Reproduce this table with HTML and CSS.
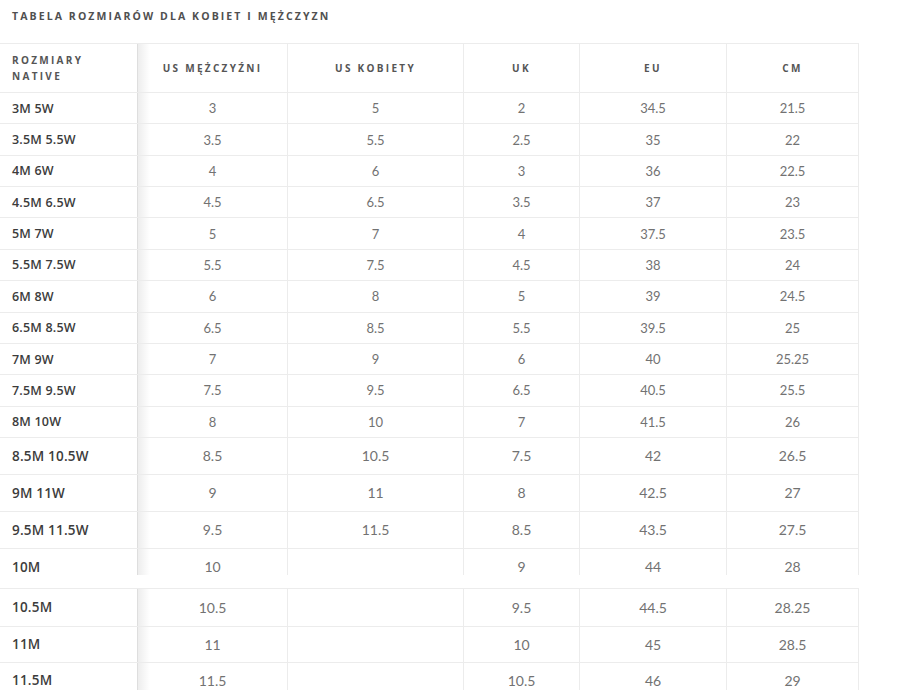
FILE: index.html
```html
<!DOCTYPE html>
<html lang="pl">
<head>
<meta charset="utf-8">
<title>Tabela rozmiarów</title>
<link rel="stylesheet" href="styles.css">
</head>
<body>
<h1 class="title">TABELA ROZMIARÓW DLA KOBIET I MĘŻCZYZN</h1>
<div class="table">
  <div class="row head">
    <div class="cell first">ROZMIARY<br>NATIVE</div>
    <div class="cell sh">US MĘŻCZYŹNI</div>
    <div class="cell">US KOBIETY</div>
    <div class="cell">UK</div>
    <div class="cell">EU</div>
    <div class="cell">CM</div>
  </div>
  <div class="row r1"><div class="cell first">3M 5W</div><div class="cell sh">3</div><div class="cell">5</div><div class="cell">2</div><div class="cell">34.5</div><div class="cell">21.5</div></div>
  <div class="row r1"><div class="cell first">3.5M 5.5W</div><div class="cell sh">3.5</div><div class="cell">5.5</div><div class="cell">2.5</div><div class="cell">35</div><div class="cell">22</div></div>
  <div class="row r1"><div class="cell first">4M 6W</div><div class="cell sh">4</div><div class="cell">6</div><div class="cell">3</div><div class="cell">36</div><div class="cell">22.5</div></div>
  <div class="row r1"><div class="cell first">4.5M 6.5W</div><div class="cell sh">4.5</div><div class="cell">6.5</div><div class="cell">3.5</div><div class="cell">37</div><div class="cell">23</div></div>
  <div class="row r1"><div class="cell first">5M 7W</div><div class="cell sh">5</div><div class="cell">7</div><div class="cell">4</div><div class="cell">37.5</div><div class="cell">23.5</div></div>
  <div class="row r1"><div class="cell first">5.5M 7.5W</div><div class="cell sh">5.5</div><div class="cell">7.5</div><div class="cell">4.5</div><div class="cell">38</div><div class="cell">24</div></div>
  <div class="row r1"><div class="cell first">6M 8W</div><div class="cell sh">6</div><div class="cell">8</div><div class="cell">5</div><div class="cell">39</div><div class="cell">24.5</div></div>
  <div class="row r1"><div class="cell first">6.5M 8.5W</div><div class="cell sh">6.5</div><div class="cell">8.5</div><div class="cell">5.5</div><div class="cell">39.5</div><div class="cell">25</div></div>
  <div class="row r1"><div class="cell first">7M 9W</div><div class="cell sh">7</div><div class="cell">9</div><div class="cell">6</div><div class="cell">40</div><div class="cell">25.25</div></div>
  <div class="row r1"><div class="cell first">7.5M 9.5W</div><div class="cell sh">7.5</div><div class="cell">9.5</div><div class="cell">6.5</div><div class="cell">40.5</div><div class="cell">25.5</div></div>
  <div class="row r1"><div class="cell first">8M 10W</div><div class="cell sh">8</div><div class="cell">10</div><div class="cell">7</div><div class="cell">41.5</div><div class="cell">26</div></div>
  <div class="row r2"><div class="cell first">8.5M 10.5W</div><div class="cell sh">8.5</div><div class="cell">10.5</div><div class="cell">7.5</div><div class="cell">42</div><div class="cell">26.5</div></div>
  <div class="row r2"><div class="cell first">9M 11W</div><div class="cell sh">9</div><div class="cell">11</div><div class="cell">8</div><div class="cell">42.5</div><div class="cell">27</div></div>
  <div class="row r2"><div class="cell first">9.5M 11.5W</div><div class="cell sh">9.5</div><div class="cell">11.5</div><div class="cell">8.5</div><div class="cell">43.5</div><div class="cell">27.5</div></div>
  <div class="row r2 cut"><div class="cell first">10M</div><div class="cell sh">10</div><div class="cell"></div><div class="cell">9</div><div class="cell">44</div><div class="cell">28</div></div>
</div>
<div class="table second">
  <div class="row r2 ra"><div class="cell first">10.5M</div><div class="cell sh">10.5</div><div class="cell"></div><div class="cell">9.5</div><div class="cell">44.5</div><div class="cell">28.25</div></div>
  <div class="row r2 rb"><div class="cell first">11M</div><div class="cell sh">11</div><div class="cell"></div><div class="cell">10</div><div class="cell">45</div><div class="cell">28.5</div></div>
  <div class="row r2 rc"><div class="cell first">11.5M</div><div class="cell sh">11.5</div><div class="cell"></div><div class="cell">10.5</div><div class="cell">46</div><div class="cell">29</div></div>
</div>
</body>
</html>
```

FILE: styles.css
```css
html, body {
  margin: 0;
  padding: 0;
  background: #ffffff;
}
body {
  font-family: "Lato", "Open Sans", sans-serif;
}
.title {
  margin: 0;
  height: 43px;
  box-sizing: border-box;
  padding: 9px 0 0 12px;
  font-family: "Open Sans", sans-serif;
  font-weight: 700;
  font-size: 10.5px;
  line-height: 14px;
  letter-spacing: 2.1px;
  color: #505050;
}
.table {
  width: 859px;
  border-top: 1px solid #ececec;
  border-right: 1px solid #ececec;
  box-sizing: border-box;
}
.table.second {
  margin-top: 13px;
}
.row {
  display: grid;
  grid-template-columns: 137px 150px 176px 116px 147px 132px;
  box-sizing: border-box;
  border-bottom: 1px solid #ececec;
}
.cell {
  display: flex;
  align-items: center;
  justify-content: center;
  border-left: 1px solid #ececec;
  font-size: 13px;
  color: #727272;
  overflow: hidden;
}
.cell.first {
  border-left: none;
  justify-content: flex-start;
  padding-left: 12px;
  font-family: "Open Sans", sans-serif;
  font-weight: 600;
  color: #3c3c3c;
  font-size: 12.5px;
  letter-spacing: 0.2px;
}
.cell.sh {
  border-left: 1px solid #dedede;
  background: linear-gradient(to right, rgba(0,0,0,0.07), rgba(0,0,0,0) 12px);
}
.head {
  height: 49px;
}
.head .cell {
  font-family: "Open Sans", sans-serif;
  font-weight: 700;
  font-size: 10px;
  letter-spacing: 2.3px;
  color: #555555;
  line-height: 16px;
}
.head .cell.first {
  font-size: 10px;
  color: #555555;
  letter-spacing: 2.3px;
}
.r1 {
  height: 31.36px;
}
.r2 {
  height: 37px;
}
.r2 .cell {
  font-size: 14px;
}
.r2 .cell.first {
  font-size: 13.5px;
}
.cut {
  height: 26px;
  border-bottom: none;
}
.cut .cell {
  align-items: flex-start;
  padding-top: 9px;
  box-sizing: border-box;
}
.ra {
  height: 38px;
}
.rb {
  height: 36px;
}
.rc {
  height: 36px;
}
```
